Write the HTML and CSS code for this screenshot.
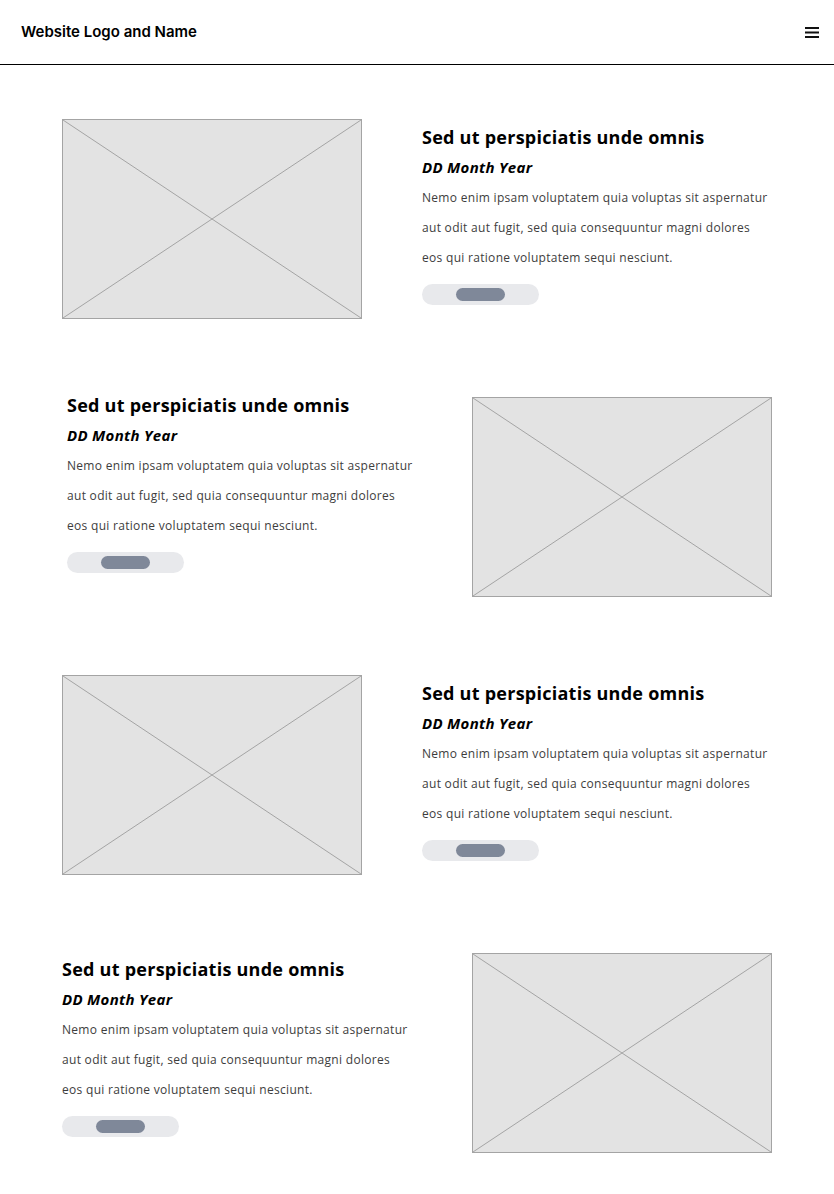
FILE: index.html
```html
<!DOCTYPE html>
<html lang="en">
<head>
<meta charset="utf-8">
<title>Blog</title>
<link rel="stylesheet" href="styles.css">
</head>
<body>
<header class="site-header">
  <div class="brand">Website Logo and Name</div>
  <button class="menu" aria-label="Menu">
    <svg width="14" height="11" viewBox="0 0 14 11"><rect x="0" y="0" width="14" height="2"/><rect x="0" y="4.5" width="14" height="2"/><rect x="0" y="9" width="14" height="2"/></svg>
  </button>
</header>
<main class="posts">
  <article class="post post-a">
    <div class="ph"><svg viewBox="0 0 300 200" preserveAspectRatio="none"><line x1="0" y1="0" x2="300" y2="200"/><line x1="300" y1="0" x2="0" y2="200"/></svg></div>
    <div class="text">
      <h2>Sed ut perspiciatis unde omnis</h2>
      <p class="date">DD Month Year</p>
      <p class="body">Nemo enim ipsam voluptatem quia voluptas sit aspernatur<br>aut odit aut fugit, sed quia consequuntur magni dolores<br>eos qui ratione voluptatem sequi nesciunt.</p>
      <div class="btn"><span></span></div>
    </div>
  </article>
  <article class="post post-b">
    <div class="text">
      <h2>Sed ut perspiciatis unde omnis</h2>
      <p class="date">DD Month Year</p>
      <p class="body">Nemo enim ipsam voluptatem quia voluptas sit aspernatur<br>aut odit aut fugit, sed quia consequuntur magni dolores<br>eos qui ratione voluptatem sequi nesciunt.</p>
      <div class="btn"><span></span></div>
    </div>
    <div class="ph"><svg viewBox="0 0 300 200" preserveAspectRatio="none"><line x1="0" y1="0" x2="300" y2="200"/><line x1="300" y1="0" x2="0" y2="200"/></svg></div>
  </article>
  <article class="post post-c">
    <div class="ph"><svg viewBox="0 0 300 200" preserveAspectRatio="none"><line x1="0" y1="0" x2="300" y2="200"/><line x1="300" y1="0" x2="0" y2="200"/></svg></div>
    <div class="text">
      <h2>Sed ut perspiciatis unde omnis</h2>
      <p class="date">DD Month Year</p>
      <p class="body">Nemo enim ipsam voluptatem quia voluptas sit aspernatur<br>aut odit aut fugit, sed quia consequuntur magni dolores<br>eos qui ratione voluptatem sequi nesciunt.</p>
      <div class="btn"><span></span></div>
    </div>
  </article>
  <article class="post post-d">
    <div class="text">
      <h2>Sed ut perspiciatis unde omnis</h2>
      <p class="date">DD Month Year</p>
      <p class="body">Nemo enim ipsam voluptatem quia voluptas sit aspernatur<br>aut odit aut fugit, sed quia consequuntur magni dolores<br>eos qui ratione voluptatem sequi nesciunt.</p>
      <div class="btn"><span></span></div>
    </div>
    <div class="ph"><svg viewBox="0 0 300 200" preserveAspectRatio="none"><line x1="0" y1="0" x2="300" y2="200"/><line x1="300" y1="0" x2="0" y2="200"/></svg></div>
  </article>
</main>
</body>
</html>
```
FILE: styles.css
```css
* { box-sizing: border-box; }
html, body { margin: 0; padding: 0; background: #fff; }
body { font-family: "Open Sans", "Noto Sans", sans-serif; color: #000; }

.site-header {
  height: 65px;
  padding: 0 15px 0 21px;
  display: flex;
  align-items: center;
  justify-content: space-between;
  border-bottom: 1px solid #000;
}
.brand {
  font-family: Inter, "Liberation Sans", sans-serif;
  font-weight: 600;
  font-size: 15px;
  letter-spacing: 0;
  padding-bottom: 1px;
}
.menu {
  border: 0; background: none; padding: 0; margin: 0;
  width: 14px; height: 11px; display: block;
}
.menu svg { display: block; fill: #111; }

.posts { padding-top: 54px; padding-bottom: 41px; }

.post { display: flex; align-items: flex-start; height: 200px; margin-bottom: 78px; }
.post:last-child { margin-bottom: 0; }

.ph {
  width: 300px; height: 200px; flex: none;
  background: #e3e3e3;
  border: 1px solid #a4a4a4;
}
.ph svg { display: block; width: 100%; height: 100%; }
.ph line { stroke: #a4a4a4; stroke-width: 1; vector-effect: non-scaling-stroke; }

.post-a .ph, .post-c .ph { margin-left: 62px; }
.post-a .text, .post-c .text { margin-left: 60px; padding-top: 6px; }
.post-b .text { margin-left: 67px; width: 405px; margin-top: -4px; }
.post-d .text { margin-left: 62px; width: 410px; padding-top: 4px; }

.text h2 {
  margin: 0;
  font-weight: 700;
  font-size: 18px;
  line-height: 24px;
  letter-spacing: 0.25px;
}
.date {
  margin: 9px 0 0;
  font-weight: 700;
  font-style: italic;
  font-size: 15px;
  line-height: 18px;
  letter-spacing: 0.3px;
}
.body {
  margin: 7px 0 0;
  font-size: 12px;
  line-height: 30px;
  color: #3d3d3d;
  letter-spacing: 0.3px;
}
.btn {
  margin-top: 11px;
  width: 117px; height: 21px;
  border-radius: 11px;
  background: #e8e9ec;
  display: flex; align-items: center;
  padding-left: 34px;
}
.btn span {
  display: block;
  width: 49px; height: 13px;
  border-radius: 7px;
  background: #7f8899;
}
```
